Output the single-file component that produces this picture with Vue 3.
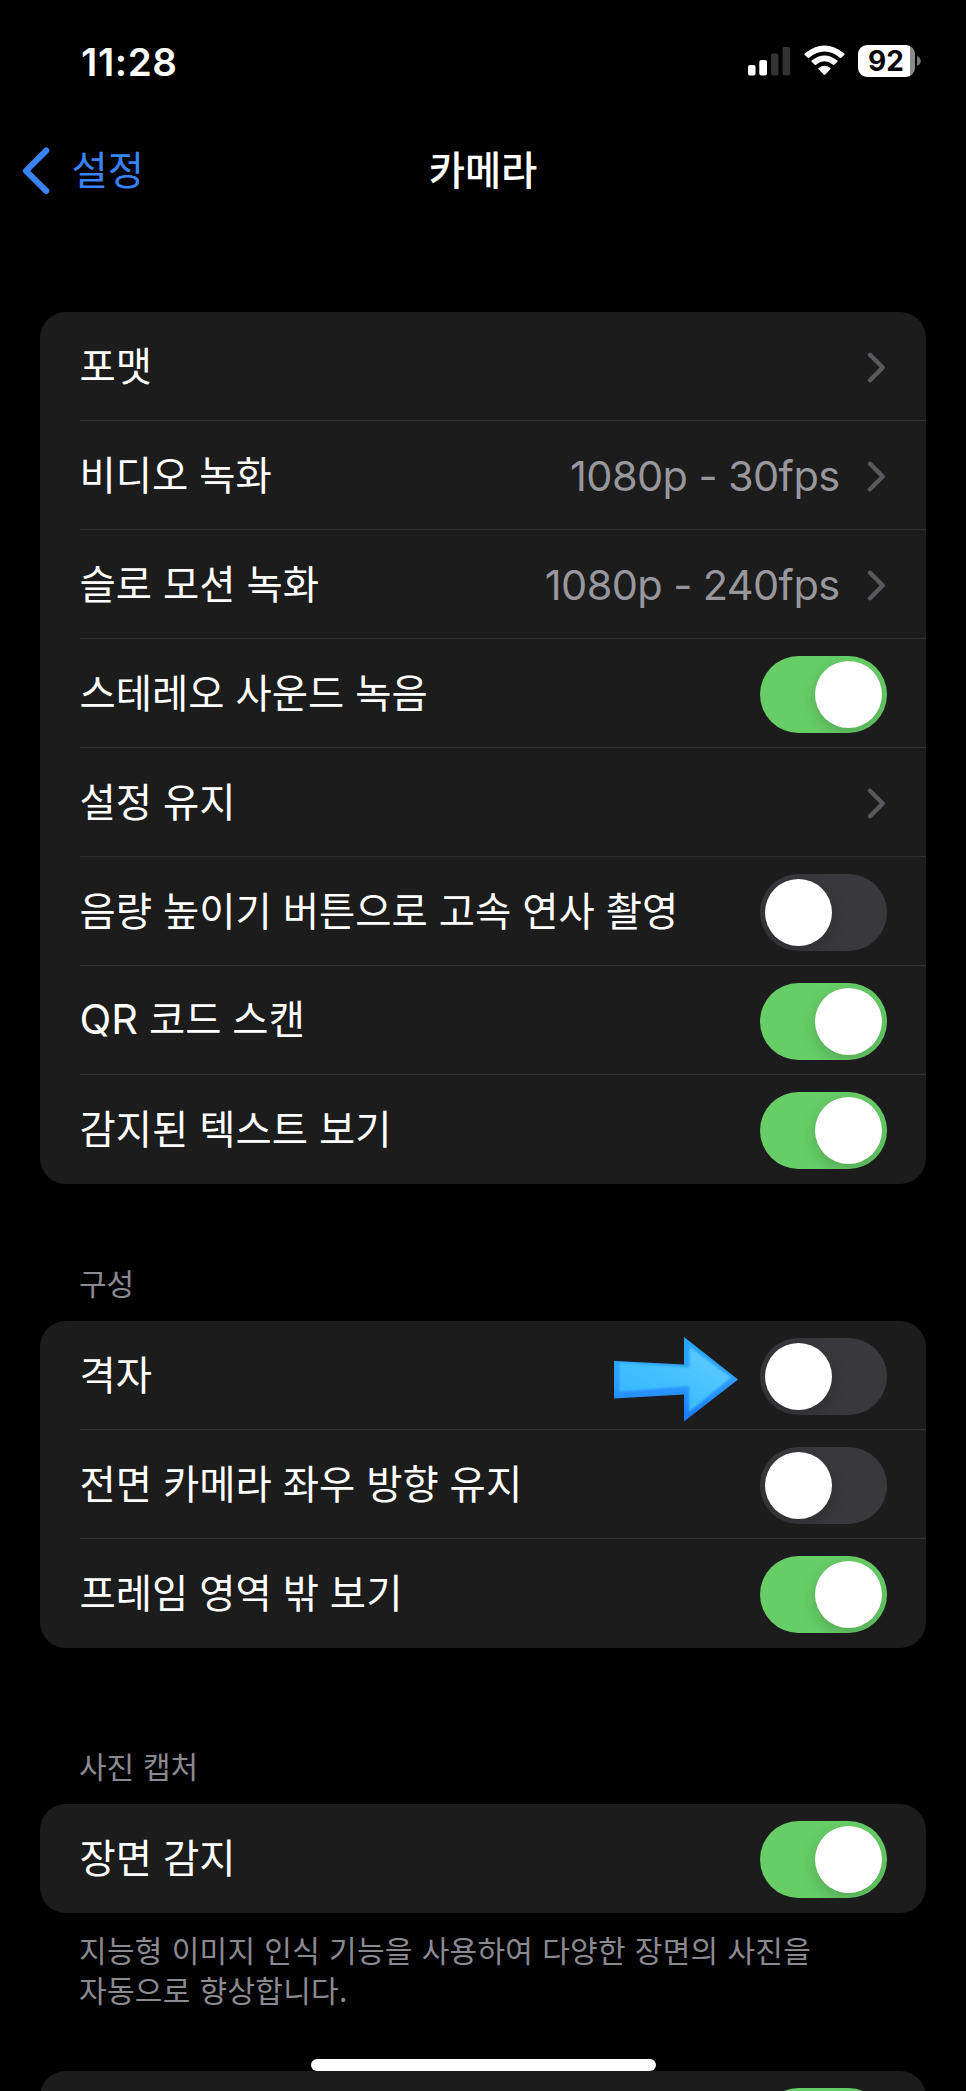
<script setup>
const groups = [
  {
    id: 'capture',
    rows: [
      { label: '포맷', type: 'link' },
      { label: '비디오 녹화', type: 'link', value: '1080p - 30fps' },
      { label: '슬로 모션 녹화', type: 'link', value: '1080p - 240fps' },
      { label: '스테레오 사운드 녹음', type: 'toggle', on: true },
      { label: '설정 유지', type: 'link' },
      { label: '음량 높이기 버튼으로 고속 연사 촬영', type: 'toggle', on: false },
      { latin: 'QR', label: ' 코드 스캔', type: 'toggle', on: true },
      { label: '감지된 텍스트 보기', type: 'toggle', on: true },
    ],
  },
  {
    id: 'composition',
    header: '구성',
    rows: [
      { label: '격자', type: 'toggle', on: false, arrow: true },
      { label: '전면 카메라 좌우 방향 유지', type: 'toggle', on: false },
      { label: '프레임 영역 밖 보기', type: 'toggle', on: true },
    ],
  },
  {
    id: 'photo',
    header: '사진 캡처',
    rows: [{ label: '장면 감지', type: 'toggle', on: true }],
    footer: ['지능형 이미지 인식 기능을 사용하여 다양한 장면의 사진을', '자동으로 향상합니다.'],
  },
  { id: 'next', rows: [{ label: '', type: 'toggle', on: true }] },
]
</script>

<template>
  <div class="screen">
    <div class="status">
      <span class="time">11:28</span>
      <div class="indicators">
        <svg class="signal" width="43" height="30" viewBox="0 0 43 30">
          <rect x="0" y="19" width="7.5" height="10.5" rx="2" fill="#fff" />
          <rect x="11.3" y="14" width="7.7" height="15.5" rx="2" fill="#fff" />
          <rect x="23" y="7.5" width="7.5" height="22" rx="2" fill="#333" />
          <rect x="34.5" y="1" width="7.7" height="28.5" rx="2" fill="#333" />
        </svg>
        <svg class="wifi" width="41" height="31" viewBox="0 0 41 31">
          <path d="M0.6 8.6 Q20.5 -7.8 40.4 8.6 Q40.9 9.1 40.4 9.7 L37.2 12.7 Q36.6 13.2 36 12.7 Q20.5 0.2 5 12.7 Q4.4 13.2 3.8 12.7 L0.6 9.7 Q0.1 9.1 0.6 8.6 Z" fill="#fff" />
          <path d="M7.6 15.6 Q20.5 5.2 33.4 15.6 Q34 16.2 33.4 16.8 L30.2 19.7 Q29.6 20.2 29 19.7 Q20.5 13 12 19.7 Q11.4 20.2 10.8 19.7 L7.6 16.8 Q7 16.2 7.6 15.6 Z" fill="#fff" />
          <path d="M14.6 23 Q20.5 18.4 26.4 23 Q27 23.6 26.4 24.2 L21.3 29.6 Q20.5 30.4 19.7 29.6 L14.6 24.2 Q14 23.6 14.6 23 Z" fill="#fff" />
        </svg>
        <div class="battery"><span>92</span></div>
        <svg class="nub" width="4" height="10" viewBox="0 0 4 10">
          <path d="M0 0 Q3.8 1.6 3.8 5 T0 10 Z" fill="#777" />
        </svg>
      </div>
    </div>

    <div class="nav">
      <div class="back">
        <svg width="28" height="48" viewBox="0 0 28 48">
          <path d="M24.3 3.5 L3.9 23.8 L24.3 44" fill="none" stroke="#3a82f7" stroke-width="6" stroke-linecap="round" stroke-linejoin="round" />
        </svg>
        <span>설정</span>
      </div>
      <h1>카메라</h1>
    </div>

    <section v-for="g in groups" :key="g.id" :class="['group', g.id]">
      <h2 v-if="g.header">{{ g.header }}</h2>
      <div class="card">
        <div v-for="r in g.rows" :key="r.label" class="row">
          <span class="label"><span v-if="r.latin" class="latin">{{ r.latin }}</span>{{ r.label }}</span>
          <span v-if="r.value" class="value">{{ r.value }}</span>
          <svg v-if="r.arrow" class="arrow" width="124" height="85" viewBox="0 0 124 85">
            <defs>
              <linearGradient id="face" x1="0" y1="1" x2="1" y2="0">
                <stop offset="0" stop-color="#35b6ff" />
                <stop offset=".5" stop-color="#43c1ff" />
                <stop offset="1" stop-color="#68ccff" />
              </linearGradient>
              <linearGradient id="edge" x1="0" y1="0" x2="0" y2="1">
                <stop offset="0" stop-color="#25a9fb" />
                <stop offset=".5" stop-color="#2f9fff" />
                <stop offset="1" stop-color="#1877fb" />
              </linearGradient>
              <filter id="soften" x="-10%" y="-10%" width="120%" height="120%">
                <feGaussianBlur stdDeviation="1.3" />
              </filter>
            </defs>
            <path d="M0 24 L70 27.5 V0 L124 42.5 L70 84.5 V57.5 L0 61.5 Z" fill="url(#edge)" />
            <path d="M5.5 25.5 L75.5 30.5 V10 L117 40.5 L75 75 V49 L5.5 54.5 Z" fill="url(#face)" filter="url(#soften)" />
          </svg>
          <svg v-if="r.type === 'link'" class="chevron" width="19" height="31" viewBox="0 0 19 31">
            <path d="M3 2.8 L15.7 15.5 L3 28.2" fill="none" stroke="#5a5a5e" stroke-width="4.4" stroke-linecap="round" stroke-linejoin="round" />
          </svg>
          <div v-else :class="['toggle', { on: r.on }]"><i></i></div>
        </div>
      </div>
      <p v-if="g.footer"><template v-for="(line, i) in g.footer" :key="i"><br v-if="i">{{ line }}</template></p>
    </section>

    <div class="home"></div>
  </div>
</template>

<style>
body {
  background: #000;
}
</style>

<style scoped>
.screen {
  position: relative;
  box-sizing: border-box;
  width: 966px;
  height: 2091px;
  overflow: hidden;
  background: #000;
  color: #fff;
  font-family: 'Noto Sans CJK KR', sans-serif;
}
.status {
  display: flex;
  justify-content: space-between;
  height: 122px;
  padding: 0 45.5px 0 81px;
}
.time {
  padding-top: 38.5px;
  font: 600 38.5px/46px Inter, sans-serif;
  letter-spacing: 0.6px;
}
.indicators {
  display: flex;
  align-items: flex-start;
  padding-top: 45px;
}
.signal {
  margin-top: 1px;
}
.wifi {
  margin-left: 13px;
}
.battery {
  width: 56.5px;
  height: 32px;
  margin-left: 13px;
  border-radius: 9px;
  background: linear-gradient(90deg, #fff 52.5px, #8a8a8a 52.5px);
  color: #000;
  font: 700 28px/32px Inter, sans-serif;
}
.battery span {
  display: block;
  width: 56px;
  text-align: center;
}
.nub {
  margin: 11px 0 0 2px;
}
.nav {
  display: grid;
  grid-template-columns: 1fr auto 1fr;
  align-items: center;
  height: 97px;
}
.back {
  display: flex;
  align-items: center;
  gap: 21.5px;
  padding-left: 22px;
  color: #3a82f7;
  font-size: 39.4px;
  line-height: 58px;
}
.back span {
  padding-bottom: 5px;
}
.nav h1 {
  margin: 0;
  padding-bottom: 5px;
  font-size: 39.4px;
  font-weight: 500;
  line-height: 58px;
}
.group {
  padding: 0 40px;
}
.capture {
  padding-top: 93px;
}
.composition {
  padding-top: 76px;
}
.photo {
  padding-top: 95px;
}
.next {
  padding-top: 78px;
}
.group h2 {
  height: 61px;
  margin: 0;
  padding-left: 39px;
  color: #8a8a90;
  font-size: 30px;
  font-weight: 400;
  line-height: 44px;
  word-spacing: 2px;
}
.card {
  overflow: hidden;
  border-radius: 26px;
  background: #1c1c1c;
}
.row {
  box-sizing: border-box;
  display: flex;
  align-items: center;
  height: 109px;
  padding: 1px 39px 0 39.5px;
  background: linear-gradient(#303032, #303032) 39.5px 108px / 100% 1px no-repeat;
}
.row:last-child {
  background: none;
}
.label {
  flex: 1;
  padding-bottom: 6px;
  font-size: 39.4px;
  line-height: 58px;
  letter-spacing: 0.05px;
  white-space: pre;
  word-spacing: 2px;
}
.latin {
  font: 400 41.5px/58px Inter, sans-serif;
}
.value {
  color: #98979e;
  font: 400 41.5px/58px Inter, sans-serif;
  letter-spacing: -0.6px;
}
.chevron {
  margin: 0 1px 0 27.5px;
}
.arrow {
  margin: 7px 22px 0 0;
}
.toggle {
  width: 127px;
  height: 77px;
  border-radius: 39px;
  background: #39383d;
  overflow: hidden;
}
.toggle i {
  display: block;
  width: 67px;
  height: 67px;
  margin: 5px;
  border-radius: 50%;
  background: #fff;
  box-shadow: 0 6px 16px rgba(0, 0, 0, 0.18);
}
.toggle.on {
  background: #67ce67;
}
.toggle.on i {
  margin-left: 55px;
}
.group p {
  height: 63px;
  margin: 0;
  padding: 17px 39px 0;
  color: #8a8a90;
  font-size: 30px;
  line-height: 39.7px;
  letter-spacing: 0.28px;
  white-space: nowrap;
  word-spacing: 2px;
}
.home {
  position: absolute;
  left: 311px;
  top: 2058.5px;
  width: 344.5px;
  height: 12.5px;
  border-radius: 7px;
  background: #fff;
}
</style>
